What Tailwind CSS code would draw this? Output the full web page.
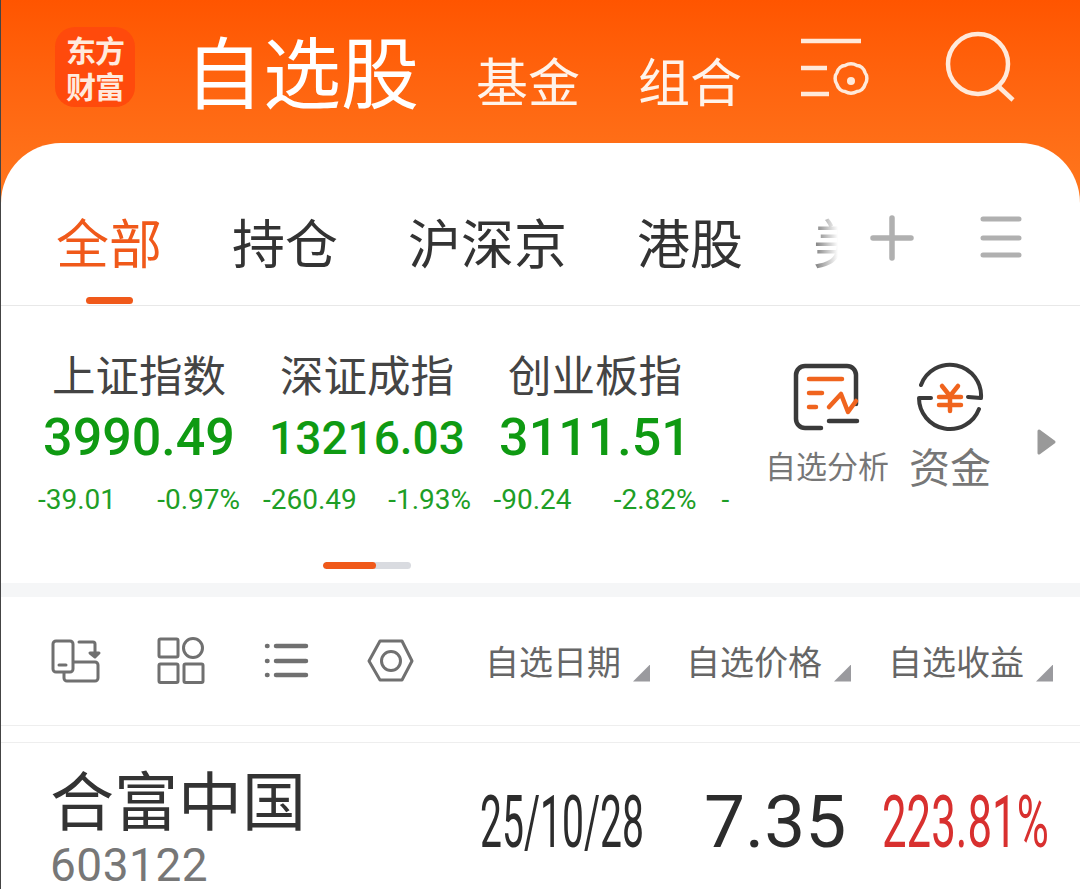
<!DOCTYPE html>
<html>
<head>
    <meta charset="utf-8">
    <title>自选股</title>
    <script src="https://cdn.jsdelivr.net/npm/@tailwindcss/browser@4"></script>
</head>
<body class="m-0 bg-white">
<div class="w-[1080px] h-[889px] overflow-hidden border-l border-[#444] font-['Roboto','Noto_Sans_CJK_SC',sans-serif] bg-gradient-to-b from-[#ff5500] to-[#ff7a1f] bg-[length:100%_220px] bg-no-repeat">

    <!-- header -->
    <div class="h-[143px] flex items-start font-['Noto_Sans_CJK_SC',sans-serif] text-[#fff3ea]">
        <div class="ml-[54px] mt-[27px] w-[80px] h-[80px] rounded-[20px] bg-[#ff4a0c] flex flex-col items-center justify-center text-[30px] leading-[36px] font-bold text-[#ffeadd] tracking-[-1px]">
            <span>东方</span>
            <span>财富</span>
        </div>
        <div class="ml-[50px] mt-[19px] text-[78px] leading-[100px] text-white">自选股</div>
        <div class="ml-[57px] mt-[44px] text-[52px] leading-[72px]">基金</div>
        <div class="ml-[58px] mt-[44px] text-[52px] leading-[72px]">组合</div>
        <svg class="ml-[58px] mt-[36px]" width="72" height="66" viewBox="801 36 72 66" fill="none" stroke="#ffe9da" stroke-width="4.5">
            <path d="M802 41H862M802 68H828M802 94H830"/>
            <path stroke-width="3.5" d="M846 65.5c3.500-2 8.500-2 12 0 3.500 0 7 3 8 7 2.500 3 2.500 9 0 12-1 4-4.500 7-8 7-3.500 2-8.500 2-12 0-3.500 0-7-3-8-7-2.500-3-2.500-9 0-12 1-4 4.500-7 8-7z"/>
            <circle cx="852" cy="81" r="4" fill="#ffe9da" stroke="none"/>
        </svg>
        <svg class="ml-[70px] mt-[30px]" width="74" height="74" viewBox="941 30 74 74" fill="none" stroke="#ffe9da" stroke-width="4.500">
            <circle cx="977" cy="64" r="30"/>
            <path d="M997 86L1012 100"/>
        </svg>
    </div>

    <!-- card -->
    <div class="bg-white rounded-t-[60px] h-[746px] font-['Noto_Sans_CJK_SC',sans-serif]">

        <!-- tabs -->
        <div class="relative h-[163px] border-b border-[#e8e8e8] flex items-start">
            <div class="w-[837px] overflow-hidden flex text-[53px] leading-[70px] pt-[63px] text-[#333] whitespace-nowrap relative">
                <div class="ml-[55px] text-[#f0591a] relative">全部</div>
                <div class="ml-[70px]">持仓</div>
                <div class="ml-[70px]">沪深京</div>
                <div class="ml-[70px]">港股</div>
                <div class="ml-[70px]">美股</div>
                <div class="absolute top-0 bottom-0 right-0 w-[26px] bg-gradient-to-r from-white/30 to-white"></div>
            </div>
            <svg class="mt-[72px] ml-[32px]" width="44" height="46" viewBox="870 215 44 46" fill="none" stroke="#b0b0b0" stroke-width="5.500" stroke-linecap="round">
                <path d="M892 218V258M873 238H911"/>
            </svg>
            <svg class="mt-[72px] ml-[65px]" width="44" height="46" viewBox="978 215 44 46" fill="none" stroke="#b0b0b0" stroke-width="5" stroke-linecap="round">
                <path d="M982 219H1018M982 238H1018M982 255H1018"/>
            </svg>
            <div class="absolute left-[85px] top-[154px] w-[47px] h-[7px] rounded-full bg-[#f0591a]"></div>
        </div>

        <!-- indexes -->
        <div class="relative h-[277px] flex items-start">
            <div class="w-[729px] overflow-hidden flex pl-[24px] whitespace-nowrap shrink-0">
                <div class="w-[228px] shrink-0 flex flex-col items-center">
                    <div class="mt-[38px] text-[43.500px] leading-[60px] text-[#444]">上证指数</div>
                    <div class="mt-[-2px] h-[72px] font-['Roboto'] font-medium text-[#0f9a12] text-[52px] leading-[72px]">3990.49</div>
                    <div class="mt-[4px] w-[202px] flex justify-between font-['Roboto'] text-[#1e9e26] text-[28px] leading-[44px]"><span>-39.01</span><span>-0.97%</span></div>
                </div>
                <div class="w-[228px] shrink-0 flex flex-col items-center">
                    <div class="mt-[38px] text-[43.500px] leading-[60px] text-[#444]">深证成指</div>
                    <div class="mt-[-2px] h-[72px] font-['Roboto'] font-medium text-[#0f9a12] text-[46px] leading-[72px]">13216.03</div>
                    <div class="mt-[4px] w-[208px] flex justify-between font-['Roboto'] text-[#1e9e26] text-[28px] leading-[44px]"><span>-260.49</span><span>-1.93%</span></div>
                </div>
                <div class="w-[228px] shrink-0 flex flex-col items-center">
                    <div class="mt-[38px] text-[43.500px] leading-[60px] text-[#444]">创业板指</div>
                    <div class="mt-[-2px] h-[72px] font-['Roboto'] font-medium text-[#0f9a12] text-[52px] leading-[72px]">3111.51</div>
                    <div class="mt-[4px] w-[203px] flex justify-between font-['Roboto'] text-[#1e9e26] text-[28px] leading-[44px]"><span>-90.24</span><span>-2.82%</span></div>
                </div>
                <div class="w-[228px] shrink-0 flex flex-col items-center">
                    <div class="mt-[38px] text-[43.500px] leading-[60px] text-[#444]">科创50</div>
                    <div class="mt-[-2px] h-[72px] font-['Roboto'] font-medium text-[#0f9a12] text-[52px] leading-[72px]">1334.20</div>
                    <div class="mt-[4px] w-[203px] flex justify-between font-['Roboto'] text-[#1e9e26] text-[28px] leading-[44px]"><span>-30.12</span><span>-2.20%</span></div>
                </div>
            </div>
            <div class="w-[130px] ml-[32px] shrink-0 flex flex-col items-center">
                <svg class="mt-[56px]" width="68" height="72" viewBox="793 361 68 72" fill="none" stroke-linecap="round" stroke-linejoin="round">
                    <path stroke="#3a3a3a" stroke-width="4.500" d="M821 427H805a9 9 0 0 1-9-9V374a9 9 0 0 1 9-9H847a9 9 0 0 1 9 9V403M829 420H857"/>
                    <path stroke="#f0641e" stroke-width="4.500" d="M809 378H842M809 392H822M809 406H816M829 406L841 393L848 411L856 400"/>
                </svg>
                <div class="mt-[9px] text-[31px] leading-[44px] text-[#777] whitespace-nowrap">自选分析</div>
            </div>
            <div class="w-[100px] ml-[8px] shrink-0 flex flex-col items-center">
                <svg class="mt-[56px]" width="72" height="72" viewBox="951 361 72 72" fill="none" stroke-linecap="round" stroke-linejoin="round">
                    <path stroke="#3a3a3a" stroke-width="4" d="M958 384A31 31 0 0 1 1018 397L1005 396M1016 408A31 31 0 0 1 956 397L968 397"/>
                    <path stroke="#f0641e" stroke-width="4.500" d="M979 385L987 395L995 385M976 396H998M976 404H998M987 395V410"/>
                </svg>
                <div class="mt-[3px] text-[41px] leading-[56px] text-[#777] whitespace-nowrap">资金</div>
            </div>
            <svg class="absolute left-[1036px] top-[122px]" width="20" height="28" viewBox="0 0 20 28"><path d="M2 3L17 14L2 25z" fill="#999" stroke="#999" stroke-width="3" stroke-linejoin="round"/></svg>
            <div class="absolute left-[322px] top-[256px] w-[88px] h-[7px] rounded-full bg-[#d9dbe0] overflow-hidden">
                <div class="w-[53px] h-full rounded-full bg-[#f0591a]"></div>
            </div>
        </div>

        <div class="h-[14px] bg-[#f5f6f7]"></div>

        <!-- toolbar -->
        <div class="h-[129px] border-b border-[#eeeeee] flex items-center">
            <svg class="ml-[49px] shrink-0" width="368" height="50" viewBox="50 636 368 50" fill="none" stroke="#707070" stroke-width="3" stroke-linecap="round" stroke-linejoin="round">
                <path d="M56 641H70a3 3 0 0 1 3 3V669a3 3 0 0 1-3 3H56a3 3 0 0 1-3-3V644a3 3 0 0 1 3-3zM59 665H66"/>
                <path d="M74 662H95a3 3 0 0 1 3 3V678a3 3 0 0 1-3 3H67a3 3 0 0 1-3-3V673M79 642H93a2 2 0 0 1 2 2V654"/>
                <path d="M90 653H99L95 657z" fill="#707070"/>
                <rect x="159" y="639" width="19" height="18" rx="1.500"/>
                <circle cx="193" cy="648" r="9.500"/>
                <rect x="159" y="664" width="19" height="18.500" rx="1.500"/>
                <rect x="184" y="664" width="19" height="18.500" rx="1.500"/>
                <path stroke-width="4.500" d="M276 646H306M276 661H306M276 675H306M267 646H267.500M267 661H267.500M267 675H267.500"/>
                <path d="M380 641H402L412 661L402 680H380L369 661z"/>
                <circle cx="391" cy="661" r="9.500"/>
            </svg>
            <div class="ml-[67px] flex items-center text-[34px] leading-[48px] text-[#666] whitespace-nowrap">
                <span>自选日期</span>
                <span class="ml-[12px] mt-[24px] w-[17px] h-[17px] bg-[#9a9a9e] [clip-path:polygon(100%_0,100%_100%,0_100%)]"></span>
                <span class="ml-[36px]">自选价格</span>
                <span class="ml-[12px] mt-[24px] w-[17px] h-[17px] bg-[#9a9a9e] [clip-path:polygon(100%_0,100%_100%,0_100%)]"></span>
                <span class="ml-[37px]">自选收益</span>
                <span class="ml-[12px] mt-[24px] w-[17px] h-[17px] bg-[#9a9a9e] [clip-path:polygon(100%_0,100%_100%,0_100%)]"></span>
            </div>
        </div>

        <div class="h-[17px] border-b border-[#eeeeee]"></div>

        <!-- stock row -->
        <div class="flex items-start">
            <div class="ml-[49px] w-[430px] shrink-0">
                <div class="mt-[12px] text-[64px] leading-[84px] text-[#333] whitespace-nowrap">合富中国</div>
                <div class="mt-[-4px] font-['Roboto'] text-[46px] leading-[60px] text-[#777] tracking-[0.5px]">603122</div>
            </div>
            <div class="mt-[36px] w-[224px] shrink-0 font-['Roboto'] text-[73px] leading-[86px] text-[#2c2c2c] origin-left scale-x-[0.535] whitespace-nowrap">25/10/28</div>
            <div class="mt-[36px] w-[178px] shrink-0 font-['Roboto'] text-[73px] leading-[86px] text-[#2c2c2c] whitespace-nowrap">7.35</div>
            <div class="mt-[36px] font-['Roboto'] text-[73px] leading-[86px] text-[#d8302f] origin-left scale-x-[0.6] whitespace-nowrap">223.81%</div>
        </div>
    </div>
</div>
</body>
</html>
